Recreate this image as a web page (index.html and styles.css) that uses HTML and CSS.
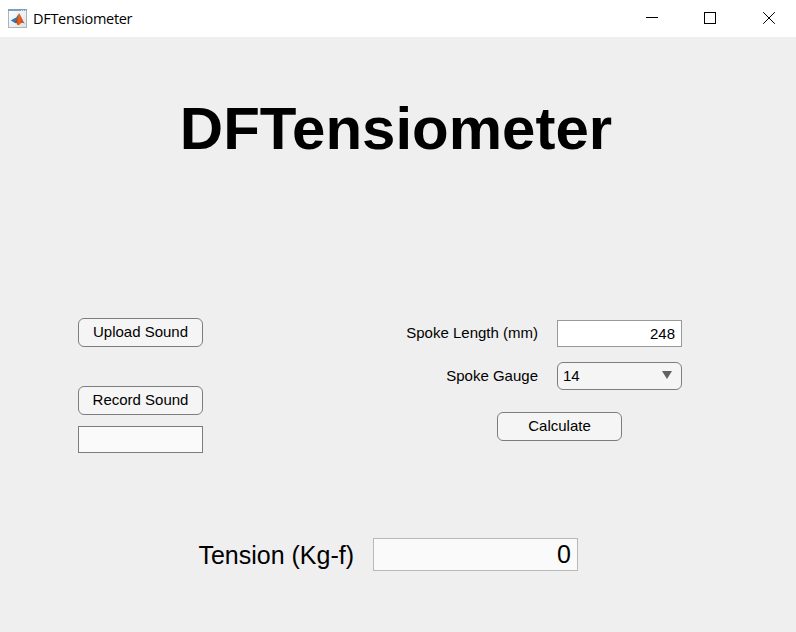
FILE: index.html
```html
<!DOCTYPE html>
<html lang="en">
<head>
<meta charset="utf-8">
<title>DFTensiometer</title>
<link rel="stylesheet" href="styles.css">
</head>
<body>
<header class="titlebar">
  <svg class="app-icon" width="20" height="20" viewBox="0 0 20 20">
    <defs>
      <linearGradient id="face" x1="0" y1="0" x2="1" y2="1"><stop offset="0" stop-color="#fff"/><stop offset="1" stop-color="#dce4e9"/></linearGradient>
      <linearGradient id="peak" x1="0" y1="0" x2="1" y2="0"><stop offset="0" stop-color="#7c2a20"/><stop offset=".45" stop-color="#e66a20"/><stop offset=".7" stop-color="#d94d18"/><stop offset="1" stop-color="#a8321a"/></linearGradient>
    </defs>
    <rect x=".5" y=".5" width="18" height="18" fill="url(#face)" stroke="#a9b4bc"/>
    <rect x="0" y="0" width="19" height="2" fill="#7f9fbd"/>
    <rect x="13" y="1" width="1" height="1" fill="#dce8f2"/><rect x="15" y="1" width="1" height="1" fill="#dce8f2"/><rect x="17" y="1" width="1" height="1" fill="#dce8f2"/>
    <path d="M2.8 11.5 6.5 9.3 8 8.8 10.5 5 9.5 12 7.5 14.2Z" fill="#3878b0"/>
    <path d="M11 4C12.5 5.5 14.5 11.5 16.8 14.7 14.5 13.3 13.3 13.5 12 15.2 10.5 17 9 16.5 8.7 14.3 8.2 13.3 7.5 13.5 6.5 13.5 9 12 9.5 7 11 4Z" fill="url(#peak)"/>
  </svg>
  <span class="app-name">DFTensiometer</span>
  <svg class="window-controls" width="131" height="14" viewBox="0 0 131 14" fill="none" stroke="#000">
    <path d="M1 6.5H13"/>
    <rect x="59.5" y="1.5" width="11" height="11"/>
    <path d="M118.2 1.2 129.8 12.8M129.8 1.2 118.2 12.8"/>
  </svg>
</header>
<main class="content">
  <h1 class="heading">DFTensiometer</h1>
  <div class="panels">
    <section class="sound">
      <button class="button">Upload Sound</button>
      <button class="button record">Record Sound</button>
      <div class="status"></div>
    </section>
    <section class="spoke">
      <div class="row">
        <label>Spoke Length (mm)</label>
        <div class="field">248</div>
      </div>
      <div class="row">
        <label>Spoke Gauge</label>
        <div class="select">14<svg width="10" height="8" viewBox="0 0 10 8"><path d="M0 0H10L5 8Z" fill="#616161"/></svg></div>
      </div>
      <button class="button calculate">Calculate</button>
    </section>
  </div>
  <div class="result">
    <label>Tension (Kg-f)</label>
    <div class="tension">0</div>
  </div>
</main>
</body>
</html>
```
FILE: styles.css
```css
* { box-sizing: border-box; }
body {
  margin: 0;
  height: 632px;
  overflow: hidden;
  background: #efefef;
  color: #000;
  font: 15px/17px "Liberation Sans", Arial, sans-serif;
}
.titlebar {
  display: flex;
  align-items: center;
  height: 37px;
  padding: 0 20px 0 8px;
  background: #fff;
}
.app-icon { flex: none; }
.app-name {
  margin: 1px 0 0 5px;
  font: 14.5px/20px "Open Sans", "Noto Sans", sans-serif;
  letter-spacing: -0.3px;
}
.window-controls { margin-left: auto; margin-top: -2px; }
.content { padding-top: 57px; }
.heading {
  margin: 0;
  padding-right: 4px;
  height: 70px;
  text-align: center;
  font-size: 60px;
  line-height: 70px;
}
.panels {
  display: flex;
  justify-content: space-between;
  padding: 154px 114px 0 78px;
}
.sound { display: flex; flex-direction: column; width: 125px; }
.button {
  width: 125px;
  height: 29px;
  padding: 0 0 2px;
  border: 1px solid #7d7d7d;
  border-radius: 6px;
  background: #f5f5f5;
  color: #000;
  font: inherit;
}
.record { margin-top: 39px; }
.status {
  height: 27px;
  margin-top: 11px;
  border: 1px solid #7d7d7d;
  background: #fafafa;
}
.spoke {
  display: flex;
  flex-direction: column;
  gap: 15px;
  width: 276px;
  padding-top: 2px;
}
.row {
  display: flex;
  align-items: center;
  justify-content: flex-end;
  gap: 19px;
  white-space: nowrap;
}
.row label { padding-bottom: 2px; }
.field, .select { width: 125px; border: 1px solid #7d7d7d; }
.field {
  height: 27px;
  padding: 4px 6px 0 0;
  border-color: #999;
  background: #fff;
  text-align: right;
}
.select {
  display: flex;
  align-items: center;
  justify-content: space-between;
  height: 28px;
  padding: 0 9px 1px 5px;
  border-radius: 6px;
  background: #f5f5f5;
}
.select svg { margin-top: -1px; }
.calculate { margin: 7px 0 0 91px; }
.result {
  display: flex;
  align-items: center;
  justify-content: flex-end;
  gap: 19px;
  margin: 85px 218px 0 0;
  font-size: 25px;
  line-height: 29px;
}
.result label { padding-top: 2px; }
.tension {
  width: 205px;
  height: 33px;
  padding: 1px 6px;
  border: 1px solid #b9b9b9;
  background: #fafafa;
  text-align: right;
}
```
